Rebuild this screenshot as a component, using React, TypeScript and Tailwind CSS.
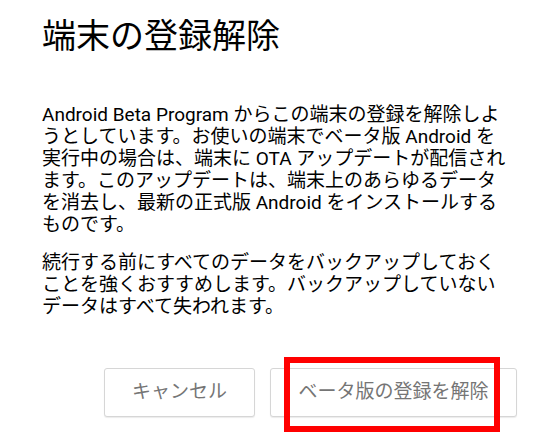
import React from 'react';

export default function App() {
  return (
    <div className="w-[560px] h-[445px] bg-white overflow-hidden flex flex-col pl-[42px] pr-[43px] pt-[16px] font-['Roboto','Noto_Sans_CJK_JP',sans-serif]">
      <h1 className="text-[34px] leading-[40px] text-black font-normal">端末の登録解除</h1>

      <div className="mt-[48px] text-[19px] leading-[22px] text-black whitespace-nowrap">
        <p>
          Android Beta Program からこの端末の登録を解除しよ
          <br />
          うとしています。お使いの端末でベータ版 Android を
          <br />
          実行中の場合は、端末に OTA アップデートが配信され
          <br />
          ます。このアップデートは、端末上のあらゆるデータ
          <br />
          を消去し、最新の正式版 Android をインストールする
          <br />
          ものです。
        </p>
        <p className="mt-[16px]">
          続行する前にすべてのデータをバックアップしておく
          <br />
          ことを強くおすすめします。バックアップしていない
          <br />
          データはすべて失われます。
        </p>
      </div>

      <div className="mt-auto mb-[28px] flex justify-end gap-[15px]">
        <button className="h-[49px] w-[151px] rounded-[3px] border border-[#d6d6d6] bg-white text-[19px] text-[#757575] shadow-[0_1px_1px_rgba(0,0,0,0.08)]">
          キャンセル
        </button>
        <div className="relative">
          <button className="h-[49px] w-[247px] rounded-[3px] border border-[#d6d6d6] bg-white text-[19px] text-[#757575] shadow-[0_1px_1px_rgba(0,0,0,0.08)]">
            ベータ版の登録を解除
          </button>
          <div className="absolute left-[14px] top-[-11px] w-[216px] h-[75px] border-[6px] border-[#ff0000] pointer-events-none" />
        </div>
      </div>
    </div>
  );
}
